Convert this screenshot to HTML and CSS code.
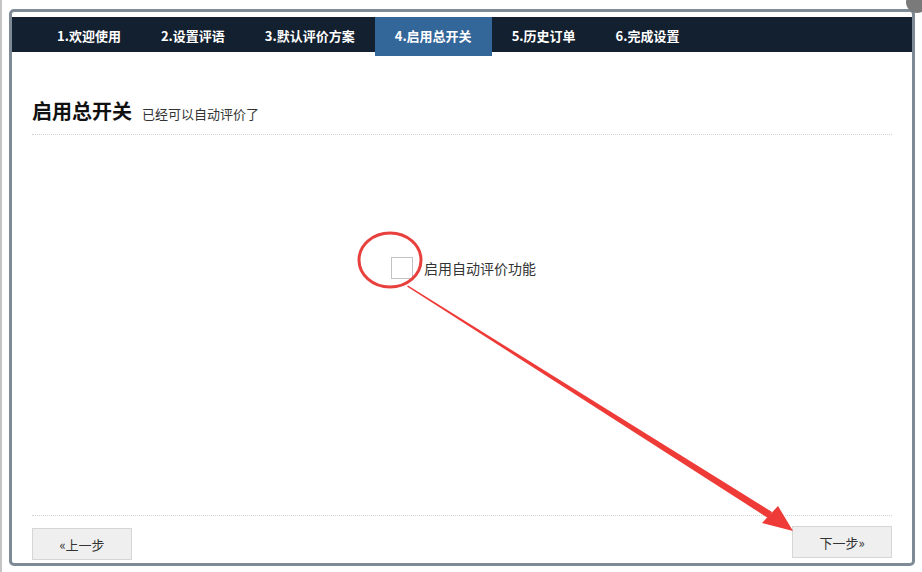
FILE: index.html
```html
<html>
<head>
<meta charset="utf-8">
<title>启用总开关</title>
<link rel="stylesheet" href="styles.css">
</head>
<body>

<div class="edge"></div>

<div id="wizard" class="wizard">
    <div class="steps">
        <div class="step">1.欢迎使用</div>
        <div class="step">2.设置评语</div>
        <div class="step">3.默认评价方案</div>
        <div class="step active">4.启用总开关</div>
        <div class="step">5.历史订单</div>
        <div class="step">6.完成设置</div>
    </div>

    <div class="content">
        <div class="head">
            <h2>启用总开关</h2>
            <span class="sub">已经可以自动评价了</span>
        </div>
        <div class="body">
            <label class="switch">
                <span id="box" class="box"></span>
                <span>启用自动评价功能</span>
            </label>
        </div>
        <div class="foot">
            <button class="prev">«上一步</button>
            <button class="next">下一步»</button>
        </div>
    </div>
</div>

<div class="close"></div>

<svg class="marks" width="922" height="572" viewBox="0 0 922 572">
    <ellipse cx="390" cy="260" rx="31" ry="27" fill="none" stroke="#e8403d" stroke-width="3"/>
    <polygon points="407,286.5 408,285.5 772,512 768,518" fill="#ee3b38"/>
    <polygon points="793,531 762,523 778,506" fill="#ee3b38"/>
</svg>

<script>
    (function() {
    "use strict";
    var box = document.getElementById("box");
    box.parentNode.onclick = function() {
        box.classList.toggle("on");
    };
    }());
</script>
</body>
</html>
```

FILE: styles.css
```css
body {
    margin: 0px;
    background-color: #fff;
    font-family: "Microsoft YaHei", "Noto Sans CJK SC", sans-serif;
    color: #333;
}

.edge {
    position: absolute;
    left: 0px;
    top: 0px;
    width: 2px;
    height: 572px;
    background-color: #c4c4c4;
}

.wizard {
    width: 906px;
    height: 557px;
    margin: 9px 0px 0px 9px;
    box-sizing: border-box;
    border: 3px solid #7e8b96;
    border-radius: 5px;
    background-color: #fff;
}

.steps {
    display: flex;
    height: 35px;
    margin-top: 5px;
    padding-left: 25px;
    background-color: #13202f;
}

.step {
    height: 35px;
    padding: 0px 20px;
    line-height: 38px;
    font-size: 13px;
    font-weight: bold;
    color: #fff;
}

.step.active {
    height: 39px;
    background-color: #336699;
}

.content {
    padding: 0px 20px;
}

.head {
    display: flex;
    align-items: baseline;
    margin-top: 44px;
    padding-bottom: 8px;
    border-bottom: 1px dotted #d2d2d2;
}

.head h2 {
    margin: 0px;
    font-size: 20px;
    line-height: 30px;
    color: #111;
}

.sub {
    margin-left: 10px;
    font-size: 13px;
}

.body {
    height: 381px;
    box-sizing: border-box;
    padding-top: 122px;
    padding-left: 359px;
    border-bottom: 1px dotted #d2d2d2;
}

.switch {
    display: flex;
    align-items: center;
    font-size: 14px;
    color: #333;
    cursor: pointer;
}

.box {
    width: 20px;
    height: 20px;
    margin-right: 11px;
    border: 1px solid #c2c2c2;
    background-color: #fff;
}

.box.on {
    background-color: #336699;
}

.foot {
    display: flex;
    justify-content: space-between;
    align-items: flex-start;
    margin-top: 10px;
}

button {
    width: 100px;
    height: 32px;
    border: 1px solid #d6d6d6;
    background-color: #efefef;
    font-size: 13px;
    font-family: "Microsoft YaHei", "Noto Sans CJK SC", sans-serif;
    color: #333;
}

.prev {
    margin-top: 2px;
}

.close {
    position: absolute;
    left: 906px;
    top: -9px;
    width: 22px;
    height: 22px;
    border-radius: 50%;
    background-color: #7a7a7a;
}

.marks {
    position: absolute;
    left: 0px;
    top: 0px;
    pointer-events: none;
}
```
